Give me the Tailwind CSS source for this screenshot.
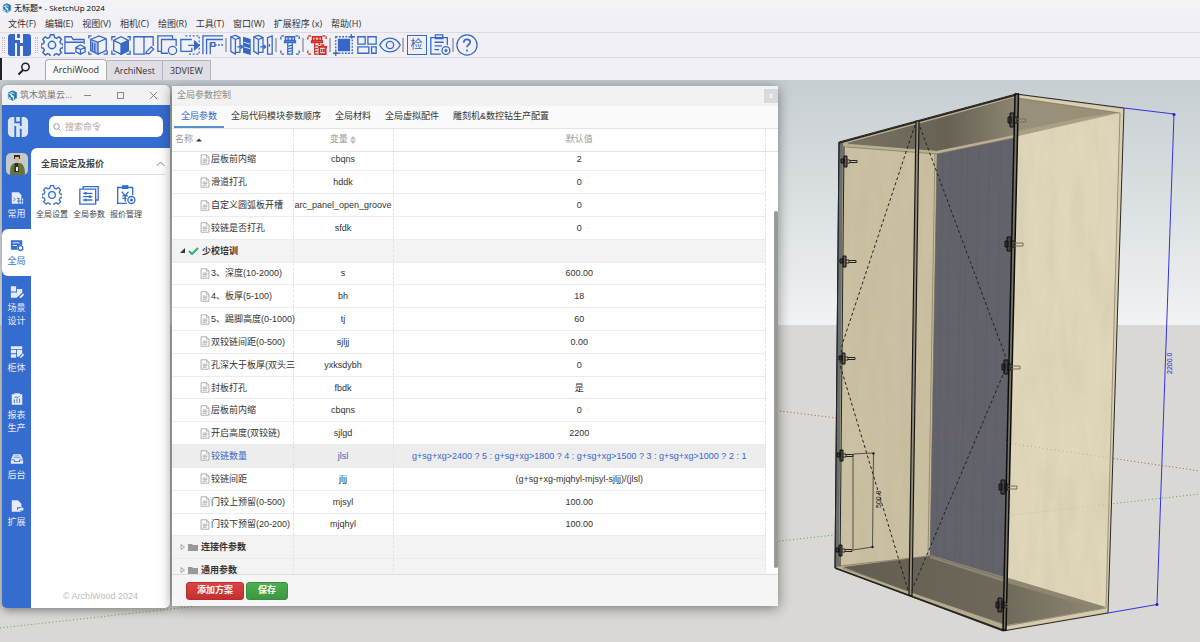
<!DOCTYPE html>
<html lang="zh-CN">
<head>
<meta charset="utf-8">
<title>无标题* - SketchUp 2024</title>
<script src="https://cdn.jsdelivr.net/npm/@tailwindcss/browser@4"></script>
</head>
<body class="flex h-screen flex-col overflow-hidden bg-[#f0f0f6] font-['Open_Sans','Noto_Sans_CJK_SC',sans-serif] text-[9px] text-[#333]">

<!-- shared symbols -->
<svg class="hidden">
  <symbol id="su" viewBox="0 0 24 24"><path fill="#1b74a8" d="M12 1 21 5v12l-6 3v-7l-5-3V7l6 3V7l-5-3-7 4V5zM3 8l5 3v3l5 3v6l-4-2v-3l-6-4z"/><path fill="none" stroke="#3b93c4" stroke-width="1.6" d="M3 6 12 2l9 4v12l-9 5-9-5zM7 8l5-2 5 2v8"/></symbol>
  <symbol id="gear" viewBox="0 0 24 24" fill="none" stroke="currentColor" stroke-width="1.6" stroke-linejoin="round"><path d="M10 1.500h4l.7 3 2.300 1 2.700-1.700 2.800 2.800-1.700 2.700 1 2.200 2.700.6v3.800l-2.700.7-1 2.300 1.700 2.600-2.900 2.800-2.600-1.700-2.300 1-.7 2.900h-4l-.7-2.900-2.300-1-2.600 1.700-2.900-2.800 1.700-2.600-1-2.300-2.700-.7v-3.800l2.700-.6 1-2.200-1.700-2.700 2.800-2.800L7 5.500l2.300-1z" transform="translate(.5 -.6) scale(.97)"/><circle cx="12" cy="12" r="4"/></symbol>
  <symbol id="bolt" viewBox="0 0 24 24" fill="none" stroke="currentColor" stroke-width="1.400"><path d="M2 6V2h4M18 2h4v4M2 18v4h4M22 18v4h-4" stroke-dasharray="3 1.500"/><path fill="currentColor" fill-opacity=".2" d="M7 3h10v4H7zM10 3v4M14 3v4"/><path d="M6 7.500h12v2H6z" fill="currentColor" fill-opacity=".6"/><path d="M9.500 10v12h5V10M9 13.500l6-1.500M9 16.500l6-1.500M9 19.500l6-1.500"/></symbol>
  <symbol id="door" viewBox="0 0 24 24" fill="none" stroke="currentColor" stroke-width="1.400" stroke-linejoin="round"><path d="M2 3l5 3v16l-5-3zM2 3l5-1.500L12 4v16h-5M7 6l5-2M9 14h6M13 12l2 2-2 2"/></symbol>
  <symbol id="file" viewBox="0 0 12 14" fill="#fff" stroke="#999" stroke-width="1"><path d="M1 1h7l3 3v9H1z"/><path d="M8 1v3h3M3 6.500h6M3 8.500h6M3 10.500h5"/></symbol>
  <symbol id="hingeL" viewBox="0 0 20 14"><path fill="#222" fill-opacity=".6" stroke="#111" d="M2 5h3v4H2zM5 2h3v11H5z"/><path fill="none" stroke="#222" d="M8 6h3v3H8M11 6.500h7v2h-7"/></symbol>
</svg>

<header>
  <div class="flex h-[15px] items-center gap-[2px] bg-[#f3f3f7] px-[2px] text-[8px] text-black">
    <svg class="size-[10px]"><use href="#su"/></svg><h1>无标题* - SketchUp 2024</h1>
  </div>
  <nav class="flex h-[17px] items-center gap-[9px] px-2 whitespace-nowrap" aria-label="菜单">
    <button>文件(F)</button><button>编辑(E)</button><button>视图(V)</button><button>相机(C)</button><button>绘图(R)</button><button>工具(T)</button><button>窗口(W)</button><button>扩展程序 (x)</button><button>帮助(H)</button>
  </nav>
  <div class="flex h-[26px] items-center border-y border-[#dcdce2] text-[#3568c8]" role="toolbar">
    <div class="mx-[2px] h-4 w-[3px] border-x border-dotted border-[#bbb]"></div>
    <button class="h-6 w-6" aria-label="主页"><svg class="size-6" viewBox="0 0 24 24" fill="#3568c8"><path d="M4 1h4v22H4a3 3 0 0 1-3-3V4a3 3 0 0 1 3-3zM10 1h3v4h-3zM8 7h5v3h3v3h-3v10h-3V10H8zM16 1h5a3 3 0 0 1 3 3v16a3 3 0 0 1-3 3h-5z"/></svg></button>
    <div class="mr-[2px] ml-1 h-4 w-[3px] border-x border-dotted border-[#bbb]"></div>
    <div class="flex" id="tools"></div>
  </div>
  <div class="flex h-[22px] items-end border-l-2 border-[#222]">
    <button class="flex h-full w-[43px] items-center justify-center" aria-label="搜索"><svg class="size-[14px]" viewBox="0 0 14 14" fill="none" stroke="#222"><circle cx="8.500" cy="5" r="3.700" stroke-width="1.500"/><path stroke-width="2" d="M6 8 1.500 12.500"/></svg></button>
    <button class="h-[21px] rounded-t-sm border border-b-0 border-[#aaa] bg-[#f9f9fc] px-[7px]">ArchiWood</button>
    <button class="h-5 border-t border-r border-[#b5b5bb] bg-[#dedee4] px-[7px]">ArchiNest</button>
    <button class="h-5 border-t border-r border-[#b5b5bb] bg-[#dedee4] px-[7px]">3DVIEW</button>
  </div>
</header>

<main class="relative min-h-0 flex-1 overflow-hidden bg-[#d9d8d4]">
  <svg class="block h-full w-full" viewBox="0 80 1200 562" preserveAspectRatio="xMaxYMin slice">
    <defs>
      <linearGradient id="sky" x2="0" y2="1"><stop stop-color="#c7ced1"/><stop offset=".55" stop-color="#dde2e4"/><stop offset="1" stop-color="#f1f3f4"/></linearGradient>
      <linearGradient id="ceil" x2="1" y2="0"><stop stop-color="#7a7464"/><stop offset=".6" stop-color="#676154"/><stop offset="1" stop-color="#8b8471"/></linearGradient>
      <linearGradient id="floor" x2="1" y2="0"><stop stop-color="#625d50"/><stop offset=".6" stop-color="#6e685a"/><stop offset="1" stop-color="#8f8873"/></linearGradient>
      <filter id="grain" x="0" y="0" width="1" height="1"><feTurbulence type="fractalNoise" baseFrequency=".07 .015" numOctaves="3" seed="4"/><feColorMatrix values="0 0 0 0 .45  0 0 0 0 .38  0 0 0 0 .22  1.600 0 0 0 -.6"/></filter>
      <clipPath id="wood"><path d="M843 146 937 153 930 555 839 566zM1018 136 1120 113 1106 608 1006 579z"/></clipPath>
      <clipPath id="back"><path d="M937 153 1014 137 1005 578 930 555z"/></clipPath>
    </defs>
    <rect y="80" width="1200" height="245" fill="url(#sky)"/>
    <rect y="325" width="1200" height="317" fill="#d9d8d4"/>
    <path d="M0 628 834 535M1110 504 1200 494" stroke="#4fa765" stroke-dasharray="1 2.500"/>
    <path d="M780 411 836 418M1110 458 1200 471" stroke="#c0505a" stroke-dasharray="1 2.500"/>

    <!-- cabinet body -->
    <path fill="#b9ae92" d="M839 142 1016 94 1124 108 1108 613 1003 631 835 568z"/>
    <path fill="#cbc0a2" d="M843 146 937 153 930 555 839 566z"/>
    <path fill="#e0d7bb" d="M1018 136 1120 113 1106 608 1006 579z"/>
    <path fill="#62626a" d="M937 153 1014 137 1005 578 930 555z"/>
    <rect x="835" y="94" width="290" height="530" clip-path="url(#wood)" filter="url(#grain)" opacity=".2"/>
    <g clip-path="url(#back)" stroke="#54545c" stroke-width="1" opacity=".2"><path d="M943 150 936 560M951 150 944 565M962 150 955 570M968 150 960 570M979 145 972 570M990 145 982 575M1001 140 992 578"/></g>
    <path fill="url(#ceil)" d="M847 143 1014 98 1014 136 937 151 850 144z"/>
    <path fill="#989079" d="M1018 98 1120 112 1018 135z"/>
    <path fill="#a79f86" d="M1018 131 1080 118 1120 112 1018 136z"/>
    <path fill="#b8ae92" d="M846 145 937 151 1014 135 1014 138 937 154 846 147z"/>
    <path fill="url(#floor)" d="M843 567 930 556 1005 579 1104 608 1007 625 909 592z"/>
    <path fill="#8d8672" d="M930 555 1005 577 1106 607 1098 609 1004 582 930 558z"/>
    <path fill="#b5ab8e" d="M838 567 1004 625 1004 630 836 569z"/>
    <path fill="#d5cbad" d="M1006 626 1105 608 1108 612 1005 630z"/>
    <path fill="#d8ceb0" d="M1018 95 1124 109 1108 612 1105 608 1120 113 1018 98z"/>
    <path fill="none" stroke="#6f6955" stroke-width=".6" d="M846 147 937 154 1014 138M937 154 930 556 1005 579M935 154 928 556M839 566 930 556M1018 98 1120 113 1106 608 1006 626M1014 98 848 144M843 568 1003 624"/>
    <path fill="#68706f" d="M839 142 843 143 839 566 835 568z"/>
    <path fill="none" stroke="#2a2925" d="M839 142 1016 94 1124 108 1108 613 1003 631 835 568z"/>
    <path fill="none" stroke="#222" d="M844 146 840 566M839 142 835 568"/>
    <path fill="none" stroke="#26251f" stroke-width="1.500" d="M835 568 1003 630M839 143 1016 95"/>
    <path fill="#948d79" stroke="#181818" stroke-width="1.200" d="M916 121 919 121 912 596 909 595z"/>
    <path fill="#777267" stroke="#0d0d0d" stroke-width="1.500" d="M1015 94 1018.500 94 1006 630 1003 630z"/>
    <path fill="none" stroke="#c0505a" stroke-opacity=".4" stroke-dasharray="1 3" d="M932 432 1110 458"/>
    <path fill="none" stroke="#4fa765" stroke-opacity=".3" stroke-dasharray="1 3" d="M940 523 1110 504"/>
    <path fill="none" stroke="#222" stroke-dasharray="3 2.500" d="M915 125 842 345 840 365 908 590M920 127 1005 355 1005 370 912 590"/>
    <!-- hinges -->
    <g>
      <use href="#hingeL" x="839" y="154" width="20" height="14"/><use href="#hingeL" x="838" y="254" width="20" height="14"/><use href="#hingeL" x="837" y="351" width="20" height="14"/><use href="#hingeL" x="835" y="448" width="20" height="14"/><use href="#hingeL" x="834" y="543" width="20" height="14"/>
    </g>
    <g id="hingesRight" fill="none" stroke="#111"></g>
    <!-- dimensions -->
    <path fill="none" stroke="#444" stroke-width=".9" d="M853 454 873.500 453 872.500 547 853 550z"/>
    <g fill="#222"><circle cx="873.500" cy="453.500" r="1.200"/><circle cx="872.500" cy="547" r="1.200"/></g>
    <text transform="translate(881 508) rotate(-90)" font-size="7" font-family="Liberation Sans" fill="#111">500.0</text>
    <path fill="none" stroke="#3434dc" d="M1124 108 1174 114 1157 604.500 1108 613"/>
    <circle cx="1174" cy="114.500" r="1.500" fill="#2020c0"/><circle cx="1157" cy="604.500" r="1.500" fill="#2020c0"/>
    <text transform="translate(1172 374) rotate(-90)" font-size="7" font-family="Liberation Sans" fill="#2626d0">2200.0</text>
  </svg>

  <!-- launcher window -->
  <section class="absolute top-[5px] left-[2px] flex h-[523px] w-[168px] flex-col overflow-hidden rounded-[5px] bg-[#356cd0] shadow-[0_2px_10px_rgba(0,0,0,0.45)]">
    <div class="flex h-5 items-center bg-[#f2f2f3] pr-3 pl-[5px] text-[#777]">
      <svg class="size-[11px]"><use href="#su"/></svg>
      <h2 class="ml-[2px] flex-1 whitespace-nowrap">筑木筑巢云...</h2>
      <div class="flex gap-6 text-[#888]">
        <button aria-label="最小化"><svg class="size-[9px]" viewBox="0 0 9 9" stroke="currentColor"><path d="M1 4.500h7"/></svg></button>
        <button aria-label="最大化"><svg class="size-[9px]" viewBox="0 0 9 9" fill="none" stroke="currentColor"><rect x="1.500" y="1.500" width="6" height="6"/></svg></button>
        <button aria-label="关闭"><svg class="size-[9px]" viewBox="0 0 9 9" stroke="currentColor"><path d="m1 1 7 7M8 1 1 8"/></svg></button>
      </div>
    </div>
    <div class="flex h-[43px] items-center justify-between pr-[7px] pl-[5px]">
      <svg class="size-[22px]" viewBox="0 0 24 24" fill="#dbe5fa"><path d="M6 1h2v22H6a5 5 0 0 1-5-5V6a5 5 0 0 1 5-5zM10 1h4v5h-4zM8 8h6v3h9v3h-9v9h-4V11H8zM16 1h2a5 5 0 0 1 5 5v12a5 5 0 0 1-5 5h-2z"/></svg>
      <label class="flex h-[21px] w-[114px] items-center gap-1 rounded-md bg-white px-1 text-[#999]">
        <svg class="size-2 shrink-0" viewBox="0 0 8 8" fill="none" stroke="currentColor"><circle cx="3.500" cy="3.500" r="2.800"/><path d="m5.500 5.500 2 2"/></svg>
        <input class="w-full min-w-0 outline-none placeholder:text-[#aaa]" placeholder="搜索命令" aria-label="搜索命令">
      </label>
    </div>
    <div class="flex min-h-0 flex-1">
      <nav class="w-[29px] shrink-0 text-[#e4ecfb]" aria-label="分类">
        <div class="flex h-[34px] justify-center pt-[5px]"><svg class="size-[22px]" viewBox="0 0 22 22"><defs><clipPath id="av"><rect width="22" height="22" rx="5"/></clipPath></defs><g clip-path="url(#av)"><path fill="#c5c9c8" d="M0 0h22v22H0z"/><path fill="#63743f" d="M4 22c0-6 0-11 5-12h5c4 1 5 6 5 12z"/><path fill="#2b2e27" d="M9 10h3l1 9H8zM8 2h6v4H8z"/><path fill="#d9b89b" d="M9 4h4v5l-2 1-2-1z"/><path fill="#eee" d="M10 14h2v4h-2z"/></g></svg></div>
        <div id="side"></div>
      </nav>
      <div class="flex flex-1 flex-col rounded-tl-md bg-white px-[5px]">
        <button class="flex h-[27px] items-center justify-between border-b border-[#ddd] pt-[6px] pl-[5px] font-bold text-[#444]">全局设定及报价<svg class="h-[6px] w-[9px]" viewBox="0 0 9 6" fill="none" stroke="#888"><path d="m.5 5 4-4 4 4"/></svg></button>
        <div class="flex gap-[5px] pt-[10px] text-[8px] leading-3 text-[#444]">
          <button class="flex w-8 flex-col items-center gap-[3px]"><svg class="size-5 text-[#356cd0]"><use href="#gear"/></svg>全局设置</button>
          <button class="flex w-8 flex-col items-center gap-[3px]"><svg class="size-5 text-[#356cd0]" viewBox="0 0 24 24" fill="none" stroke="currentColor" stroke-width="1.600"><path d="M5 5V2h18v16h-3M1 5h19v18H1zM5 10h11M5 14h11M5 18h11"/><path stroke-width="2.500" d="M8 8.500v3M13 12.500v3M8 16.500v3"/></svg>全局参数</button>
          <button class="flex w-8 flex-col items-center gap-[3px]"><svg class="size-5 text-[#356cd0]" viewBox="0 0 24 24" fill="none" stroke="currentColor" stroke-width="1.600"><path d="M13 22H2V3h18v9M7 8l4 5 4-5M11 13v7M7.500 13h7M7.500 16h5"/><path fill="currentColor" d="M8 1h6v3H8z"/><circle cx="18.500" cy="18" r="4.200"/><circle cx="18.500" cy="18" r="1"/></svg>报价管理</button>
        </div>
        <p class="mt-auto pb-[5px] text-center font-['Liberation_Sans'] text-[#bbb]">© ArchiWood 2024</p>
      </div>
    </div>
  </section>

  <!-- parameter dialog -->
  <section class="absolute top-[6px] left-[172px] flex h-[520px] w-[606px] flex-col overflow-hidden bg-white font-['Liberation_Sans','Noto_Sans_CJK_SC',sans-serif] shadow-[0_2px_12px_rgba(0,0,0,0.45)]">
    <div class="flex h-5 shrink-0 items-center justify-between bg-[#f2f2f2] pl-[5px] text-[#888]">
      <h2>全局参数控制</h2><button class="h-[14px] w-[14px] bg-[#d9d9d9] leading-3 text-white" aria-label="关闭">×</button>
    </div>
    <div class="flex h-[23px] shrink-0 border-b border-[#e4e4e4] bg-[#fafafa] px-[2px] whitespace-nowrap" role="tablist">
      <button class="border-b-2 border-[#5b8fd0] px-[7px] pt-[2px] text-[#3568c8]" role="tab">全局参数</button><button class="border-b-2 border-transparent px-[7px] pt-[2px]" role="tab">全局代码模块参数顺序</button><button class="border-b-2 border-transparent px-[7px] pt-[2px]" role="tab">全局材料</button><button class="border-b-2 border-transparent px-[7px] pt-[2px]" role="tab">全局虚拟配件</button><button class="border-b-2 border-transparent px-[7px] pt-[2px]" role="tab">雕刻机&amp;数控钻生产配置</button>
    </div>
    <div class="mr-3 shrink-0">
      <table class="h-[22px] w-full table-fixed border-collapse text-[#999]">
        <colgroup><col class="w-[121px]"><col class="w-[100px]"><col></colgroup>
        <thead><tr>
          <th class="border-r border-dashed border-[#e4e4e4] pl-[3px] text-left font-normal">名称 <svg class="inline h-1 w-[6px]" viewBox="0 0 8 4"><path fill="#333" d="m4 0 4 4H0z"/></svg></th>
          <th class="border-r border-dashed border-[#e4e4e4] font-normal">变量 <svg class="inline h-2 w-[6px]" viewBox="0 0 6 8"><path fill="#bbb" d="m3 0 3 3.500H0zM3 8 0 4.500h6z"/></svg></th>
          <th class="border-r border-dashed border-[#e4e4e4] font-normal">默认值</th>
        </tr></thead>
      </table>
    </div>
    <div class="relative min-h-0 flex-1 overflow-hidden border-t border-[#e2e2e2] pr-3">
      <table class="-mt-[4px] h-[434px] w-full table-fixed border-collapse text-center leading-[12px]">
        <colgroup><col class="w-[121px]"><col class="w-[100px]"><col></colgroup>
        <tbody id="rows"></tbody>
      </table>
      <div class="absolute top-[59px] right-0 h-[357px] w-1 rounded-full bg-[#999]"></div>
    </div>
    <div class="flex h-8 shrink-0 items-center gap-[2px] border-t border-[#ddd] bg-[#f5f5f5] px-[14px] font-bold text-white">
      <button class="h-[18px] rounded-[3px] border border-[#b82c2c] bg-linear-to-b from-[#dc4545] to-[#c32f2f] px-[10px] pt-px">添加方案</button>
      <button class="h-[18px] rounded-[3px] border border-[#388e3c] bg-linear-to-b from-[#4caf50] to-[#3d9641] px-[11px] pt-px">保存</button>
    </div>
  </section>
</main>

<script>
const S = (body) => `<svg class="size-[22px]" viewBox="0 0 24 24" fill="none" stroke="currentColor" stroke-width="1.400">${body}</svg>`;
const btn = (label, svg, cls = '') => `<button class="flex h-6 w-[23px] items-center justify-center ${cls}" aria-label="${label}">${svg}</button>`;
const sep = '<i class="mx-px my-[5px] w-[2px] bg-[#aeb0b5]"></i>';
document.getElementById('tools').innerHTML = [
  btn('设置', S('<use href="#gear"/>')),
  btn('文件夹', S('<path d="M12 21H1V3h7l2 3h12v5M1 9h20M18 12l5 2.500v5L18 22l-5-2.500v-5zM13 14.500l5 2.500 5-2.500M18 17v5"/>')),
  btn('柜体', S('<path d="M2 5V2h3M2 19v3h3M22 18v4h-4"/><path fill="currentColor" fill-opacity=".35" d="m4 6 8 3v13l-8-4z"/><path d="m4 6 9-4 8 3v13l-9 4M12 9l9-4M6 9v9M8.500 10v10"/>')),
  btn('实体', S('<path d="M2 7V3h4M2 18v4h4M22 18v4h-4M22 7V3h-3"/><path d="m4 7 8-4 8 4v11l-8 4-8-4zM4 7l8 4 8-4"/><path fill="currentColor" d="m12 11 8-4v11l-8 4z"/>')),
  btn('板件', S('<path d="M13 22H1V3h21v10M12 3v19M15 19l5-5 2.500 2.500-5 5H14z"/>')),
  btn('复制', S('<path d="M6 19H2V2h16v3M13 21H6V6h16v7"/><circle cx="18" cy="18" r="4.500"/>')),
  btn('移动', S('<path d="M14 6H2v13h12v-4M10 12.500h12"/><path fill="currentColor" d="m17 8 5 4.500-5 4.500z"/><path stroke-dasharray="2 2" d="M7 2h15v20H9"/>')),
  btn('角线', S('<path d="M1 22V2h22M5 22V6h18M9 22V9"/><path stroke-dasharray="2 1.500" d="M14 12h9"/><path d="M10 9.500h4v4h-4z"/>')),
  sep,
  btn('开门', S('<use href="#door"/><path fill="currentColor" d="m16 4 7 2v16l-7-2z"/><path stroke="#f0f0f6" stroke-width="1" d="m16 9 7 2M16 14l7 2"/>')),
  btn('关门', S('<use href="#door"/><path d="M17 22V4l5-2v20zM19 11v3"/>')),
  sep, btn('螺栓', S('<use href="#bolt"/>')), sep,
  btn('删除螺栓', S('<use href="#bolt"/><path fill="#f0f0f6" d="M13 12h11v12H13z" stroke="none"/><path stroke-width="1.800" d="M13 14h10M14.500 15v7h7v-7M16 12h4M17 16v4M19.500 16v4"/>'), 'text-[#d02a20]'), sep,
  btn('选择', S('<path fill="currentColor" d="M6 6h12v12H6z"/><path stroke-dasharray="2 1.500" d="M3 3h18v18H3z"/><path d="M20 0v5M18 3h6M3 19v5M0 21h6"/>')),
  btn('布局', S('<path d="M2 3h8v8H2zM13 3h9v8h-9zM2 14h12v7H2zM17 14h5v7h-5z"/>')),
  btn('显示', S('<path d="M.8 12C6 2 18 2 23.200 12 18 22 6 22 .8 12z"/><circle cx="12" cy="12" r="4"/>')),
  sep,
  btn('检查', '<span class="flex size-5 items-center justify-center border border-[#3568c8] text-[12px]">检</span>'),
  btn('报告', S('<path d="M13 22H2V4h18v8M6 9h10M6 13h8M6 17h5"/><path d="M7 1h8v4H7z"/><circle cx="18.500" cy="18" r="4.300"/><circle cx="18.500" cy="18" r="1"/>')),
  sep,
  btn('帮助', S('<circle cx="12" cy="12" r="11"/><path stroke-width="1.800" d="M8.500 9.500c0-5 7-4.500 7-.5 0 2.500-3.500 2.500-3.500 5.500M12 17v2"/>'))
].join('');

const side = [
  ['常用', '<path d="M2 1h8l3 3v4h2v6H2z"/><path stroke="#356cd0" fill="none" d="m4 7 2 2-2 2M8 8h3M8 11h7M10 8v6M13 8v6"/>'],
  ['全局', '<path d="M1 2h13v6l-2-1-4 3 1 3H1z"/><path stroke="#fff" d="M3 5h8M3 8h5"/><path fill="none" stroke="currentColor" stroke-width="1.500" d="m12 8 2.500 1.500v3L12 14l-2.500-1.500v-3z"/>'],
  ['场景<br>设计', '<path d="M1 1h6v6H1zM1 8h7v6H1zM8 4h6v4l-5 5H8zM11 13l4-4 1 2-3 3h-2z"/>'],
  ['柜体', '<path d="M1 1h13v3H1zM1 5h6v4H1zM8 5h6v4l-4 4H8zM1 10h6v4H1zM11 14l4-5 1 2-3 3z"/>'],
  ['报表<br>生产', '<path d="M2 2h3V1h6v1h3v12H2z"/><path stroke="#356cd0" fill="none" d="M5 8v4M8 7v5M11 7v5M5 6l2-1 2 1 2-2"/>'],
  ['后台', '<path d="M4 2h8l3 6h-4l-1 2H6L5 8H1z"/><path d="M1 9h3l1 2h6l1-2h3v4H1z"/><path stroke="#356cd0" stroke-width=".7" d="M5 4h6M4 6h8"/>'],
  ['扩展', '<path d="M2 1h7l4 4v4H8v3h4v2H2z"/><path d="M9 10h4V8l3 3-3 3v-2H9z"/>']
];
document.getElementById('side').innerHTML = side.map(([t, p], i) =>
  `<button class="flex w-full flex-col items-center gap-[2px] py-[9px] leading-[13px] ${i === 1 ? 'rounded-l-md bg-white text-[#356cd0]' : ''}"><svg class="size-[14px]" viewBox="0 0 16 15" fill="currentColor">${p}</svg><span>${t}</span></button>`).join('');

const rows = [
  ['层板前内缩', 'cbqns', '2'], ['滑道打孔', 'hddk', '0'], ['自定义圆弧板开槽', 'arc_panel_open_groove', '0'], ['铰链是否打孔', 'sfdk', '0'],
  ['少校培训', 'open'],
  ['3、深度(10-2000)', 's', '600.00'], ['4、板厚(5-100)', 'bh', '18'], ['5、踢脚高度(0-1000)', 'tj', '60'], ['双铰链间距(0-500)', 'sjljj', '0.00'],
  ['孔深大于板厚(双头三', 'yxksdybh', '0'], ['封板打孔', 'fbdk', '是'], ['层板前内缩', 'cbqns', '0'], ['开启高度(双铰链)', 'sjlgd', '2200'],
  ['铰链数量', 'jlsl', 'g+sg+xg>2400 ? 5 : g+sg+xg>1800 ? 4 : g+sg+xg>1500 ? 3 : g+sg+xg>1000 ? 2 : 1'],
  ['铰链间距', 'jljj', '(g+sg+xg-mjqhyl-mjsyl-sjljj)/(jlsl)'], ['门铰上预留(0-500)', 'mjsyl', '100.00'], ['门铰下预留(20-200)', 'mjqhyl', '100.00'],
  ['连接件参数', 'shut'], ['通用参数', 'shut']
];
const cell = 'border-r border-dashed border-r-[#e4e4e4] whitespace-nowrap';
document.getElementById('rows').innerHTML = rows.map(([n, v, d]) => {
  if (d === undefined) {
    const mark = v === 'open'
      ? '<svg class="size-[5px]" viewBox="0 0 5 5"><path fill="#333" d="M5 0v5H0z"/></svg><svg class="h-2 w-[11px]" viewBox="0 0 11 8" fill="none" stroke="#1fb573" stroke-width="2"><path d="m1 4 3 3 6-6"/></svg>'
      : '<svg class="h-[6px] w-[5px]" viewBox="0 0 5 6" fill="none" stroke="#aaa"><path d="M1 .5v5L4.500 3z"/></svg><svg class="h-2 w-[10px]" viewBox="0 0 10 8" fill="#999"><path d="M0 1h4l1 1h5v6H0z"/></svg>';
    return `<tr class="h-[22px] border-b border-[#ececec] bg-[#f3f3f3]"><td class="${cell}"><div class="flex items-center gap-[3px] pl-2 font-bold">${mark}<span>${n}</span></div></td><td class="${cell}"></td><td class="${cell}"></td></tr>`;
  }
  const on = v === 'jlsl' ? 'bg-[#ededed] text-[#3568c8]' : '';
  return `<tr class="h-[22px] border-b border-[#ececec] ${on}"><td class="${cell}"><div class="flex items-center gap-px pl-7"><svg class="h-[11px] w-[10px] shrink-0"><use href="#file"/></svg>${n}</div></td><td class="${cell}">${v}</td><td class="${cell}">${d}</td></tr>`;
}).join('');

document.getElementById('hingesRight').innerHTML = [[1012, 120], [1009, 244], [1006, 367], [1003, 487], [1000, 605]].map(([x, y]) =>
  `<path fill="#333" fill-opacity=".7" d="M${x - 2} ${y - 7}h4v14h-4zM${x - 4} ${y - 3}h3v6h-3z"/><path d="M${x + 2} ${y - 3}h3v6h-3z"/><path stroke="#776f5c" d="M${x + 5} ${y - 1}h9v3h-9"/>`).join('');
</script>
</body>
</html>
